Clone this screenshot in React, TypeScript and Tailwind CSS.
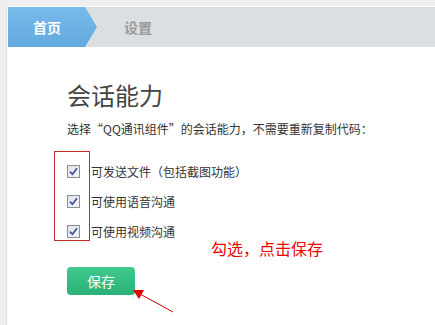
import React from 'react';

const options = ['可发送文件（包括截图功能）', '可使用语音沟通', '可使用视频沟通'];

const Check: React.FC = () => (
  <span className="w-[13px] h-[13px] border border-[#8e8f8f] bg-gradient-to-br from-[#dfe3ea] to-[#f4f6f9] flex items-center justify-center shrink-0">
    <svg width="9" height="9" viewBox="0 0 9 9">
      <path d="M1 4.6 L3.4 7.2 L8 1.2" fill="none" stroke="#3b4aa0" strokeWidth="1.6" />
    </svg>
  </span>
);

export default function App() {
  return (
    <div
      className="w-[435px] h-[325px] bg-[#efefef] pl-[6px] pt-[6px] overflow-hidden"
      style={{ fontFamily: '"Microsoft YaHei", "Noto Sans CJK SC", sans-serif' }}
    >
      <div className="h-full bg-white border-l border-[#dedede] pt-px pl-px relative">
        {/* Tabs */}
        <div className="h-[40px] bg-[#dcdfe2] flex items-center">
          <div className="h-full w-[89px] bg-gradient-to-b from-[#77bbea] to-[#62a9df] [clip-path:polygon(0_0,77px_0,89px_50%,77px_100%,0_100%)] flex items-center pl-[25px]">
            <span className="text-white text-[14px] font-bold leading-none">首页</span>
          </div>
          <span className="ml-[27px] text-[#999] text-[14px] font-bold leading-none">设置</span>
        </div>

        {/* Content */}
        <div className="pl-[59px] pt-[34px]">
          <h1 className="text-[24px] leading-[28px] text-[#444]">会话能力</h1>
          <p className="mt-[12px] text-[12px] leading-[16px] text-[#333]">
            选择“QQ通讯组件”的会话能力，不需要重新复制代码：
          </p>

          <div className="relative mt-[28px] flex flex-col gap-[17px]">
            {options.map((o) => (
              <div key={o} className="flex items-center gap-[11px] h-[13px]">
                <Check />
                <span className="text-[12px] leading-none text-[#333]">{o}</span>
              </div>
            ))}
            <div className="absolute left-[-13px] top-[-14px] w-[36px] h-[90px] border border-[#c8282a]" />
          </div>

          <button className="mt-[29px] w-[68px] h-[28px] rounded-[4px] bg-gradient-to-b from-[#40c88d] to-[#28b178] text-white text-[14px] leading-none flex items-center justify-center">
            保存
          </button>
        </div>

        {/* Annotations */}
        <span className="absolute left-[204px] top-[234px] text-[16px] leading-none text-[#e00]">勾选，点击保存</span>
        <svg className="absolute left-0 top-0" width="428" height="318" viewBox="0 0 428 318">
          <line x1="166" y1="306" x2="133" y2="288" stroke="#d40000" strokeWidth="1" />
          <polygon points="126,284 137,284 132,293" fill="#e00000" />
        </svg>
      </div>
    </div>
  );
}
